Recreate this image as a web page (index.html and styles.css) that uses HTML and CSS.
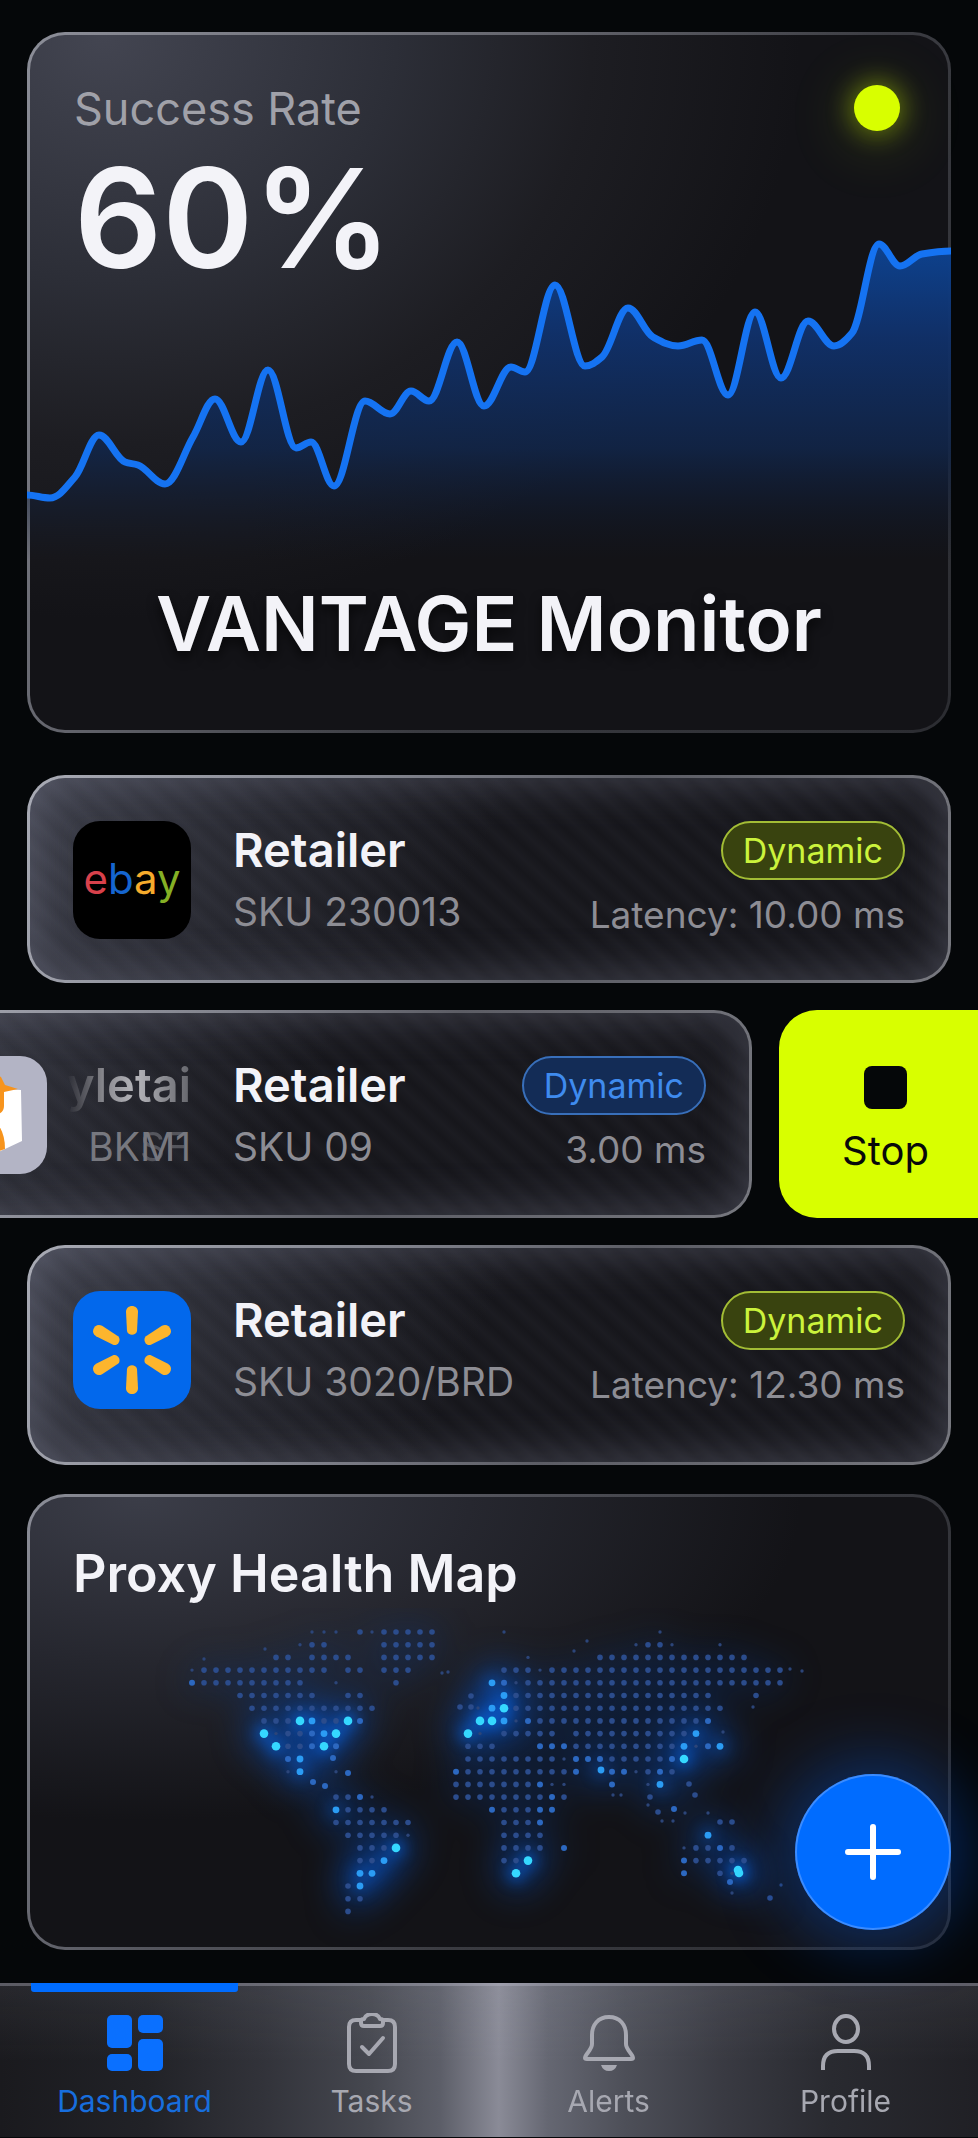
FILE: index.html
```
<!DOCTYPE html>
<html lang="en">
<head>
    <meta charset="UTF-8">
    <meta name="viewport" content="width=device-width, initial-scale=1.0">
    <title>VANTAGE Monitor</title>
    <link rel="stylesheet" href="styles.css">
</head>
<body>
    <main class="page">
        <section class="card hero">
            <div class="hero-head">
                <div>
                    <p class="hero-label">Success Rate</p>
                    <p class="hero-value">60%</p>
                </div>
                <span class="status-dot"></span>
            </div>
            <svg class="chart" viewBox="27 235 924 325" aria-hidden="true">
                <defs>
                    <linearGradient id="area-fill" gradientUnits="userSpaceOnUse" x1="0" y1="240" x2="0" y2="560">
                        <stop offset="0" stop-color="#0d4391"/>
                        <stop offset="0.3" stop-color="#10316b" stop-opacity="0.95"/>
                        <stop offset="0.65" stop-color="#11264b" stop-opacity="0.85"/>
                        <stop offset="1" stop-color="#11192c" stop-opacity="0"/>
                    </linearGradient>
                </defs>
                <path id="chart-area" fill="url(#area-fill)"/>
                <path id="chart-line" fill="none" stroke="#1573f2" stroke-width="7" stroke-linejoin="round"/>
            </svg>
            <h1 class="hero-title">VANTAGE Monitor</h1>
        </section>

        <section class="retailers">
            <article class="card row">
                <div class="logo logo-ebay"><span class="e">e</span><span class="b">b</span><span class="a">a</span><span class="y">y</span></div>
                <div class="info">
                    <h2>Retailer</h2>
                    <p>SKU 230013</p>
                </div>
                <div class="stats">
                    <span class="pill pill-lime">Dynamic</span>
                    <p>Latency: 10.00 ms</p>
                </div>
            </article>

            <div class="swipe">
                <article class="card row row-swiped">
                    <div class="logo logo-box">
                        <svg viewBox="0 0 118 118" aria-hidden="true">
                            <path fill="#fff" d="M28 36 59 22 73 33 92 34 93 85 76 93 59 101 27 84Z"/>
                            <path fill="#f7941d" d="M45 27 59 14 72 21 76 29 89 33 75 36 75 50Q75 57 68 58L54 58 54 40Z"/>
                            <path fill="#f7941d" d="M54 68 70 70Q76 79 76 93L59 99Z"/>
                        </svg>
                    </div>
                    <div class="info ghost" aria-hidden="true">
                        <h2>yletai</h2>
                        <p>BK<span class="glitch">M1<span class="glitch-over">SF</span></span></p>
                    </div>
                    <div class="info">
                        <h2>Retailer</h2>
                        <p>SKU 09</p>
                    </div>
                    <div class="stats">
                        <span class="pill pill-blue">Dynamic</span>
                        <p>3.00 ms</p>
                    </div>
                </article>
                <button class="stop" type="button"><span class="stop-icon"></span>Stop</button>
            </div>

            <article class="card row row-tall">
                <div class="logo logo-spark">
                    <svg viewBox="-59 -59 118 118" aria-hidden="true">
                        <defs>
                            <path id="ray" d="M-6-38C-6-46 6-46 6-38L5-19C4-14-4-14-5-19Z"/>
                        </defs>
                        <g fill="#fdb52d">
                            <use href="#ray"/>
                            <use href="#ray" transform="rotate(60)"/>
                            <use href="#ray" transform="rotate(120)"/>
                            <use href="#ray" transform="rotate(180)"/>
                            <use href="#ray" transform="rotate(240)"/>
                            <use href="#ray" transform="rotate(300)"/>
                        </g>
                    </svg>
                </div>
                <div class="info">
                    <h2>Retailer</h2>
                    <p>SKU 3020/BRD</p>
                </div>
                <div class="stats">
                    <span class="pill pill-lime">Dynamic</span>
                    <p>Latency: 12.30 ms</p>
                </div>
            </article>
        </section>

        <section class="card map-card">
            <h2 class="map-title">Proxy Health Map</h2>
            <svg class="map" viewBox="0 0 918 339" role="img" aria-label="Proxy health by region">
                <defs>
                    <filter id="wide-blur" filterUnits="userSpaceOnUse" x="0" y="-60" width="918" height="460" color-interpolation-filters="sRGB"><feGaussianBlur stdDeviation="16"/></filter>
                    <filter id="near-blur" filterUnits="userSpaceOnUse" x="0" y="-60" width="918" height="460" color-interpolation-filters="sRGB"><feGaussianBlur stdDeviation="7"/></filter>
                </defs>
                <g id="map-haze" filter="url(#wide-blur)"></g>
                <g id="map-glow" filter="url(#near-blur)"></g>
                <g id="map-dots"></g>
            </svg>
            <button class="fab" type="button" aria-label="Add">
                <svg viewBox="0 0 56 56" aria-hidden="true"><path d="M28 3V53M3 28H53" stroke="#fff" stroke-width="6" stroke-linecap="round"/></svg>
            </button>
        </section>
    </main>

    <nav class="tabs">
        <a class="tab active" href="#dashboard">
            <svg viewBox="0 0 60 60" aria-hidden="true">
                <g fill="#0a70ff">
                    <rect x="2" y="2" width="25" height="33" rx="5"/>
                    <rect x="33" y="2" width="25" height="18" rx="5"/>
                    <rect x="2" y="41" width="25" height="17" rx="5"/>
                    <rect x="33" y="26" width="25" height="32" rx="5"/>
                </g>
            </svg>
            Dashboard
        </a>
        <a class="tab" href="#tasks">
            <svg viewBox="0 0 60 60" aria-hidden="true">
                <g fill="none" stroke="currentColor" stroke-width="4" stroke-linejoin="round" stroke-linecap="round">
                    <path d="M19 7H14Q7 7 7 14V51Q7 58 14 58H46Q53 58 53 51V14Q53 7 46 7H41"/>
                    <path d="M19 8V10Q19 13 22 13H38Q41 13 41 10V8Q41 6 38 6Q36 1 30 1T22 6Q19 6 19 8Z"/>
                    <path d="M20 34 27 41 41 25"/>
                </g>
            </svg>
            Tasks
        </a>
        <a class="tab" href="#alerts">
            <svg viewBox="0 0 60 60" aria-hidden="true">
                <path fill="none" stroke="currentColor" stroke-width="4" stroke-linejoin="round" d="M30 4C19 4 13 12 13 22V31C13 37 6 41 6 45C6 46 7 46 8 46H52C53 46 54 46 54 45C54 41 47 37 47 31V22C47 12 41 4 30 4Z"/>
                <path fill="currentColor" d="M22 52H38Q36 58 30 58T22 52Z"/>
            </svg>
            Alerts
        </a>
        <a class="tab" href="#profile">
            <svg viewBox="0 0 60 60" aria-hidden="true">
                <g fill="none" stroke="currentColor" stroke-width="4">
                    <ellipse cx="30" cy="16" rx="12" ry="13"/>
                    <path d="M7 57V53Q7 38 22 38H38Q53 38 53 53V57"/>
                </g>
            </svg>
            Profile
        </a>
    </nav>
    <script src="script.js"></script>
</body>
</html>
```
FILE: styles.css
```
* {
    box-sizing: border-box;
}
body {
    margin: 0;
    background-color: #050709;
    font-family: Inter, "Liberation Sans", sans-serif;
    color: #f3f3f8;
    overflow-x: hidden;
}
h1, h2, p {
    margin: 0;
    font-weight: 400;
}
button {
    border: 0;
    padding: 0;
    font-family: inherit;
    cursor: pointer;
}
.page {
    padding: 32px 27px 33px;
}
.card {
    border: 3px solid transparent;
    border-radius: 38px;
}

/* Success rate */
.hero {
    background:
        radial-gradient(ellipse 76% 84% at 8% 0%, #434551 0%, #2c2e37 42%, #1d1d22 70%, #131317 100%) padding-box,
        linear-gradient(125deg, #8c8e98 0%, #66676f 35%, #3a3b41 62%, #2b2c31 100%) border-box;
}
.hero-head {
    display: flex;
    justify-content: space-between;
    padding: 48px 48px 0 44px;
}
.hero-label {
    font-size: 45px;
    line-height: 52px;
    color: #a0a1a9;
}
.hero-value {
    margin-top: 28px;
    font-size: 138px;
    line-height: 110px;
    font-weight: 600;
}
.status-dot {
    width: 46px;
    height: 46px;
    margin-top: 2px;
    border-radius: 50%;
    background: #d8ff00;
    box-shadow: 0 0 24px 4px rgba(200, 240, 0, 0.4), 0 8px 60px 14px rgba(190, 230, 0, 0.12);
}
.chart {
    display: block;
    width: calc(100% + 6px);
    margin: -38px -3px 0;
}
.hero-title {
    margin-top: 18px;
    padding-bottom: 62px;
    font-size: 76px;
    line-height: 90px;
    font-weight: 600;
    text-align: center;
    text-shadow: 0 6px 12px rgba(0, 0, 0, 0.6);
}

/* Retailer rows */
.retailers {
    display: flex;
    flex-direction: column;
    gap: 27px;
    margin: 42px 0 29px;
}
.row {
    display: flex;
    align-items: flex-start;
    gap: 42px;
    min-height: 208px;
    padding: 43px 43px 32px;
    background:
        repeating-linear-gradient(42deg, rgba(150, 155, 180, 0.035) 0, rgba(0, 0, 0, 0.03) 10px, rgba(150, 155, 180, 0.035) 20px) padding-box,
        linear-gradient(115deg, #3e404b 0%, #292a32 24%, #17171c 48%, #17171c 100%) padding-box,
        linear-gradient(115deg, #a9abb5 0%, #82848e 35%, #5c5d65 60%, #77787f 100%) border-box;
    box-shadow: inset 0 0 44px 4px rgba(125, 128, 150, 0.38);
}
.row-tall {
    min-height: 220px;
}
.logo {
    flex: none;
    width: 118px;
    height: 118px;
    border-radius: 27px;
    overflow: hidden;
}
.logo svg {
    display: block;
    width: 100%;
}
.logo-ebay {
    background: #000;
    font-size: 42px;
    line-height: 116px;
    text-align: center;
}
.e {
    color: #d8414b;
}
.b {
    color: #1565cf;
}
.a {
    color: #f6ab2c;
}
.y {
    color: #85b025;
}
.logo-box {
    background: #b3b4c5;
}
.logo-spark {
    background: #0268ec;
}
.info h2 {
    font-size: 47px;
    line-height: 58px;
    font-weight: 600;
}
.info p, .stats p {
    font-size: 39px;
    line-height: 66px;
    color: #8d8d94;
    white-space: nowrap;
}
.stats {
    display: flex;
    flex-direction: column;
    align-items: flex-end;
    gap: 2px;
    margin-left: auto;
}
.stats p {
    font-size: 37px;
}
.pill {
    padding: 0 20px;
    border: 2px solid;
    border-radius: 30px;
    font-size: 34px;
    line-height: 55px;
}
.pill-lime {
    color: #cbf33c;
    border-color: #a3bd35;
    background: #39430f;
}
.pill-blue {
    color: #3f8bee;
    border-color: #386fba;
    background: #132c56;
}

/* Swiped row with its action */
.swipe {
    display: flex;
    gap: 27px;
    margin: 0 -27px 0 -144px;
}
.row-swiped {
    flex: 1;
}
.ghost {
    display: flex;
    flex-direction: column;
    align-items: flex-end;
    width: 102px;
}
.ghost h2 {
    color: transparent;
    background: linear-gradient(90deg, rgba(150, 150, 157, 0) 0%, #8a8a90 30%, #b5b5ba 55%, #64656b 100%);
    -webkit-background-clip: text;
    background-clip: text;
}
.ghost p {
    color: #77787f;
}
.glitch {
    position: relative;
}
.glitch-over {
    position: absolute;
    left: 0;
    bottom: 0;
    line-height: 47px;
    opacity: 0.6;
}
.stop {
    display: flex;
    flex-direction: column;
    align-items: center;
    gap: 14px;
    width: 199px;
    padding: 56px 0 0 14px;
    border-radius: 38px 0 0 38px;
    background: #d8ff00;
    color: #08090a;
    font-size: 40px;
    line-height: 56px;
}
.stop-icon {
    width: 43px;
    height: 43px;
    border-radius: 8px;
    background: #050709;
}

/* Map */
.map-card {
    position: relative;
    background:
        radial-gradient(ellipse 72% 72% at 12% 0%, #3b3d48 0%, #26272f 50%, #131317 100%) padding-box,
        linear-gradient(125deg, #8c8e98 0%, #55565e 35%, #3a3b41 60%, #2a2b30 100%) border-box;
}
.map-title {
    padding: 47px 43px 4px;
    font-size: 52px;
    line-height: 60px;
    font-weight: 600;
}
.map {
    display: block;
    width: 100%;
}
.fab {
    position: absolute;
    right: -3px;
    bottom: 17px;
    display: flex;
    align-items: center;
    justify-content: center;
    width: 156px;
    height: 156px;
    border-radius: 50%;
    background: #006cff;
    box-shadow: inset 0 0 0 2px rgba(130, 180, 255, 0.45), 0 0 64px 14px rgba(0, 90, 230, 0.38);
}
.fab svg {
    width: 56px;
}

/* Tab bar */
.tabs {
    display: grid;
    grid-template-columns: repeat(4, 1fr);
    padding: 0 14px 0 16px;
    border-top: 3px solid rgba(190, 190, 205, 0.4);
    background:
        linear-gradient(180deg, rgba(190, 192, 205, 0.08), transparent 50%),
        linear-gradient(90deg, #1a1a1e 0%, #212227 15%, #32333a 27%, #464850 38%, #5c5e68 45%, #8a8b97 51%, #656772 56%, #4d4f58 64%, #393a42 74%, #292a30 85%, #202025 100%);
}
.tab {
    position: relative;
    display: flex;
    flex-direction: column;
    align-items: center;
    gap: 8px;
    height: 151px;
    padding-top: 27px;
    font-size: 30px;
    line-height: 40px;
    color: #a7a8b1;
    text-decoration: none;
}
.tab svg {
    width: 60px;
    height: 60px;
}
.active {
    color: #176ede;
}
.active::before {
    content: "";
    position: absolute;
    left: 15px;
    right: 15px;
    top: -3px;
    height: 9px;
    border-radius: 0 0 3px 3px;
    background: #006cff;
}
```
FILE: script.js
```
// Success rate samples as [x, y] in chart units
const samples = [
    [27, 495], [50, 498], [75, 477], [99, 435], [125, 462], [138, 465], [165, 484],
    [193, 437], [215, 399], [241, 442], [268, 370], [296, 448], [311, 442], [334, 486],
    [365, 401], [390, 414], [411, 391], [429, 401], [457, 342], [484, 406], [511, 367],
    [525, 372], [555, 285], [585, 366], [602, 357], [628, 308], [653, 337], [678, 346],
    [702, 340], [728, 395], [755, 312], [781, 378], [808, 321], [834, 346], [852, 333],
    [879, 244], [900, 266], [922, 254], [951, 251]
];

// Slope at each sample, flat on peaks and valleys
const slopes = samples.map((p, i) => {
    const prev = samples[i - 1];
    const next = samples[i + 1];
    if (!prev || !next) return 0;
    const a = (p[1] - prev[1]) / (p[0] - prev[0]);
    const b = (next[1] - p[1]) / (next[0] - p[0]);
    return a * b <= 0 ? 0 : 2 * a * b / (a + b);
});

let line = 'M' + samples[0].join(' ');
for (let i = 1; i < samples.length; i++) {
    const [x0, y0] = samples[i - 1];
    const [x1, y1] = samples[i];
    const d = (x1 - x0) * 0.36;
    line += `C${x0 + d} ${y0 + d * slopes[i - 1]} ${x1 - d} ${y1 - d * slopes[i]} ${x1} ${y1}`;
}
document.getElementById('chart-line').setAttribute('d', line);
document.getElementById('chart-area').setAttribute('d', line + 'V560H27Z');

// Map rows: each digit is a dot, 1 = faint ... 5 = hottest
const rows = [
    [[10, '111'], [14, '2122222'], [26, '1'], [39, '1']],
    [[9, '122'], [16, '22222'], [37, '1221'], [44, '1']],
    [[7, '22'], [10, '2222'], [16, '22222'], [28, '1'], [34, '2222222222222']],
    [[0, '122222222222'], [13, '22'], [16, '222'], [26, '222122222222222222222222']],
    [[0, '3222222222'], [12, '1'], [17, '2'], [25, '4312222222222222222222222']],
    [[4, '2222222'], [13, '22'], [26, '422222222222222222'], [47, '2']],
    [[5, '22222222222'], [25, '45222222222222222222']],
    [[6, '222542253'], [24, '55413222222222222223']],
    [[6, '5122345'], [23, '51'], [26, '22222'], [32, '22222222224']],
    [[7, '522353'], [23, '222'], [29, '333222222222'], [41, '4134']],
    [[8, '34'], [23, '222222221333222223'], [41, '5']],
    [[8, '14'], [12, '1'], [22, '32222222223'], [35, '331232']],
    [[22, '2222222311'], [35, '3'], [38, '14']],
    [[12, '223'], [22, '2222222232']],
    [[12, '42222'], [25, '322233']],
    [[12, '2222222'], [26, '2223']],
    [[13, '222221'], [26, '2222'], [43, '4']],
    [[14, '2225'], [26, '2222'], [31, '3'], [41, '12232']],
    [[14, '224'], [26, '225'], [41, '322222']],
    [[14, '44'], [27, '5'], [41, '3'], [44, '21']],
    [[13, '24']],
    [[13, '22']],
    [[13, '2']]
];

// Islands and coast dots that sit off the grid: [x, y, level]
const islands = [
    [174, 51, 1], [235, 41, 1], [412, 65, 1], [418, 64, 1],
    [441, 88, 2], [430, 99, 2], [441, 99, 2], [448, 100, 1], [303, 150, 3], [318, 165, 3],
    [283, 174, 3], [295, 178, 3], [342, 189, 1], [571, 162, 4], [583, 187, 1], [591, 187, 1],
    [620, 189, 2], [665, 187, 2], [659, 176, 2], [618, 197, 1], [628, 204, 2], [644, 201, 3],
    [655, 205, 1], [678, 205, 1], [632, 213, 1], [643, 213, 1], [690, 214, 2], [702, 214, 2],
    [693, 124, 1], [723, 99, 1], [760, 61, 1], [772, 63, 1], [557, 33, 1], [544, 43, 1],
    [700, 274, 3], [708, 262, 5], [709, 265, 5], [751, 277, 1], [740, 290, 2], [702, 285, 1]
];

const levels = {
    1: { r: 1.7, color: '#2c4579' },
    2: { r: 2.8, color: '#2b4c8c' },
    3: { r: 3, color: '#2c68c0' },
    4: { r: 3.4, color: '#2b9cf4' },
    5: { r: 4.3, color: '#35d8ff' }
};

function circle(parent, x, y, r, color, opacity) {
    const el = document.createElementNS('http://www.w3.org/2000/svg', 'circle');
    el.setAttribute('cx', x);
    el.setAttribute('cy', y);
    el.setAttribute('r', r);
    el.setAttribute('fill', color);
    el.setAttribute('opacity', opacity);
    document.getElementById(parent).appendChild(el);
}

function plot(x, y, level) {
    circle('map-dots', x, y, levels[level].r, levels[level].color, 1);
    if (level > 1) circle('map-haze', x, y, 12, '#0d3a88', 0.1);
    if (level > 3) {
        circle('map-haze', x, y, 24, '#0a50c0', 0.24);
        circle('map-glow', x, y, 9, '#0a66e6', level > 4 ? 0.55 : 0.25);
    }
}

rows.forEach((runs, r) => {
    runs.forEach(([start, digits]) => {
        [...digits].forEach((level, i) => plot(162 + (start + i) * 12, 24 + r * 12.7, Number(level)));
    });
});
islands.forEach(([x, y, level]) => plot(x, y, level));
```
